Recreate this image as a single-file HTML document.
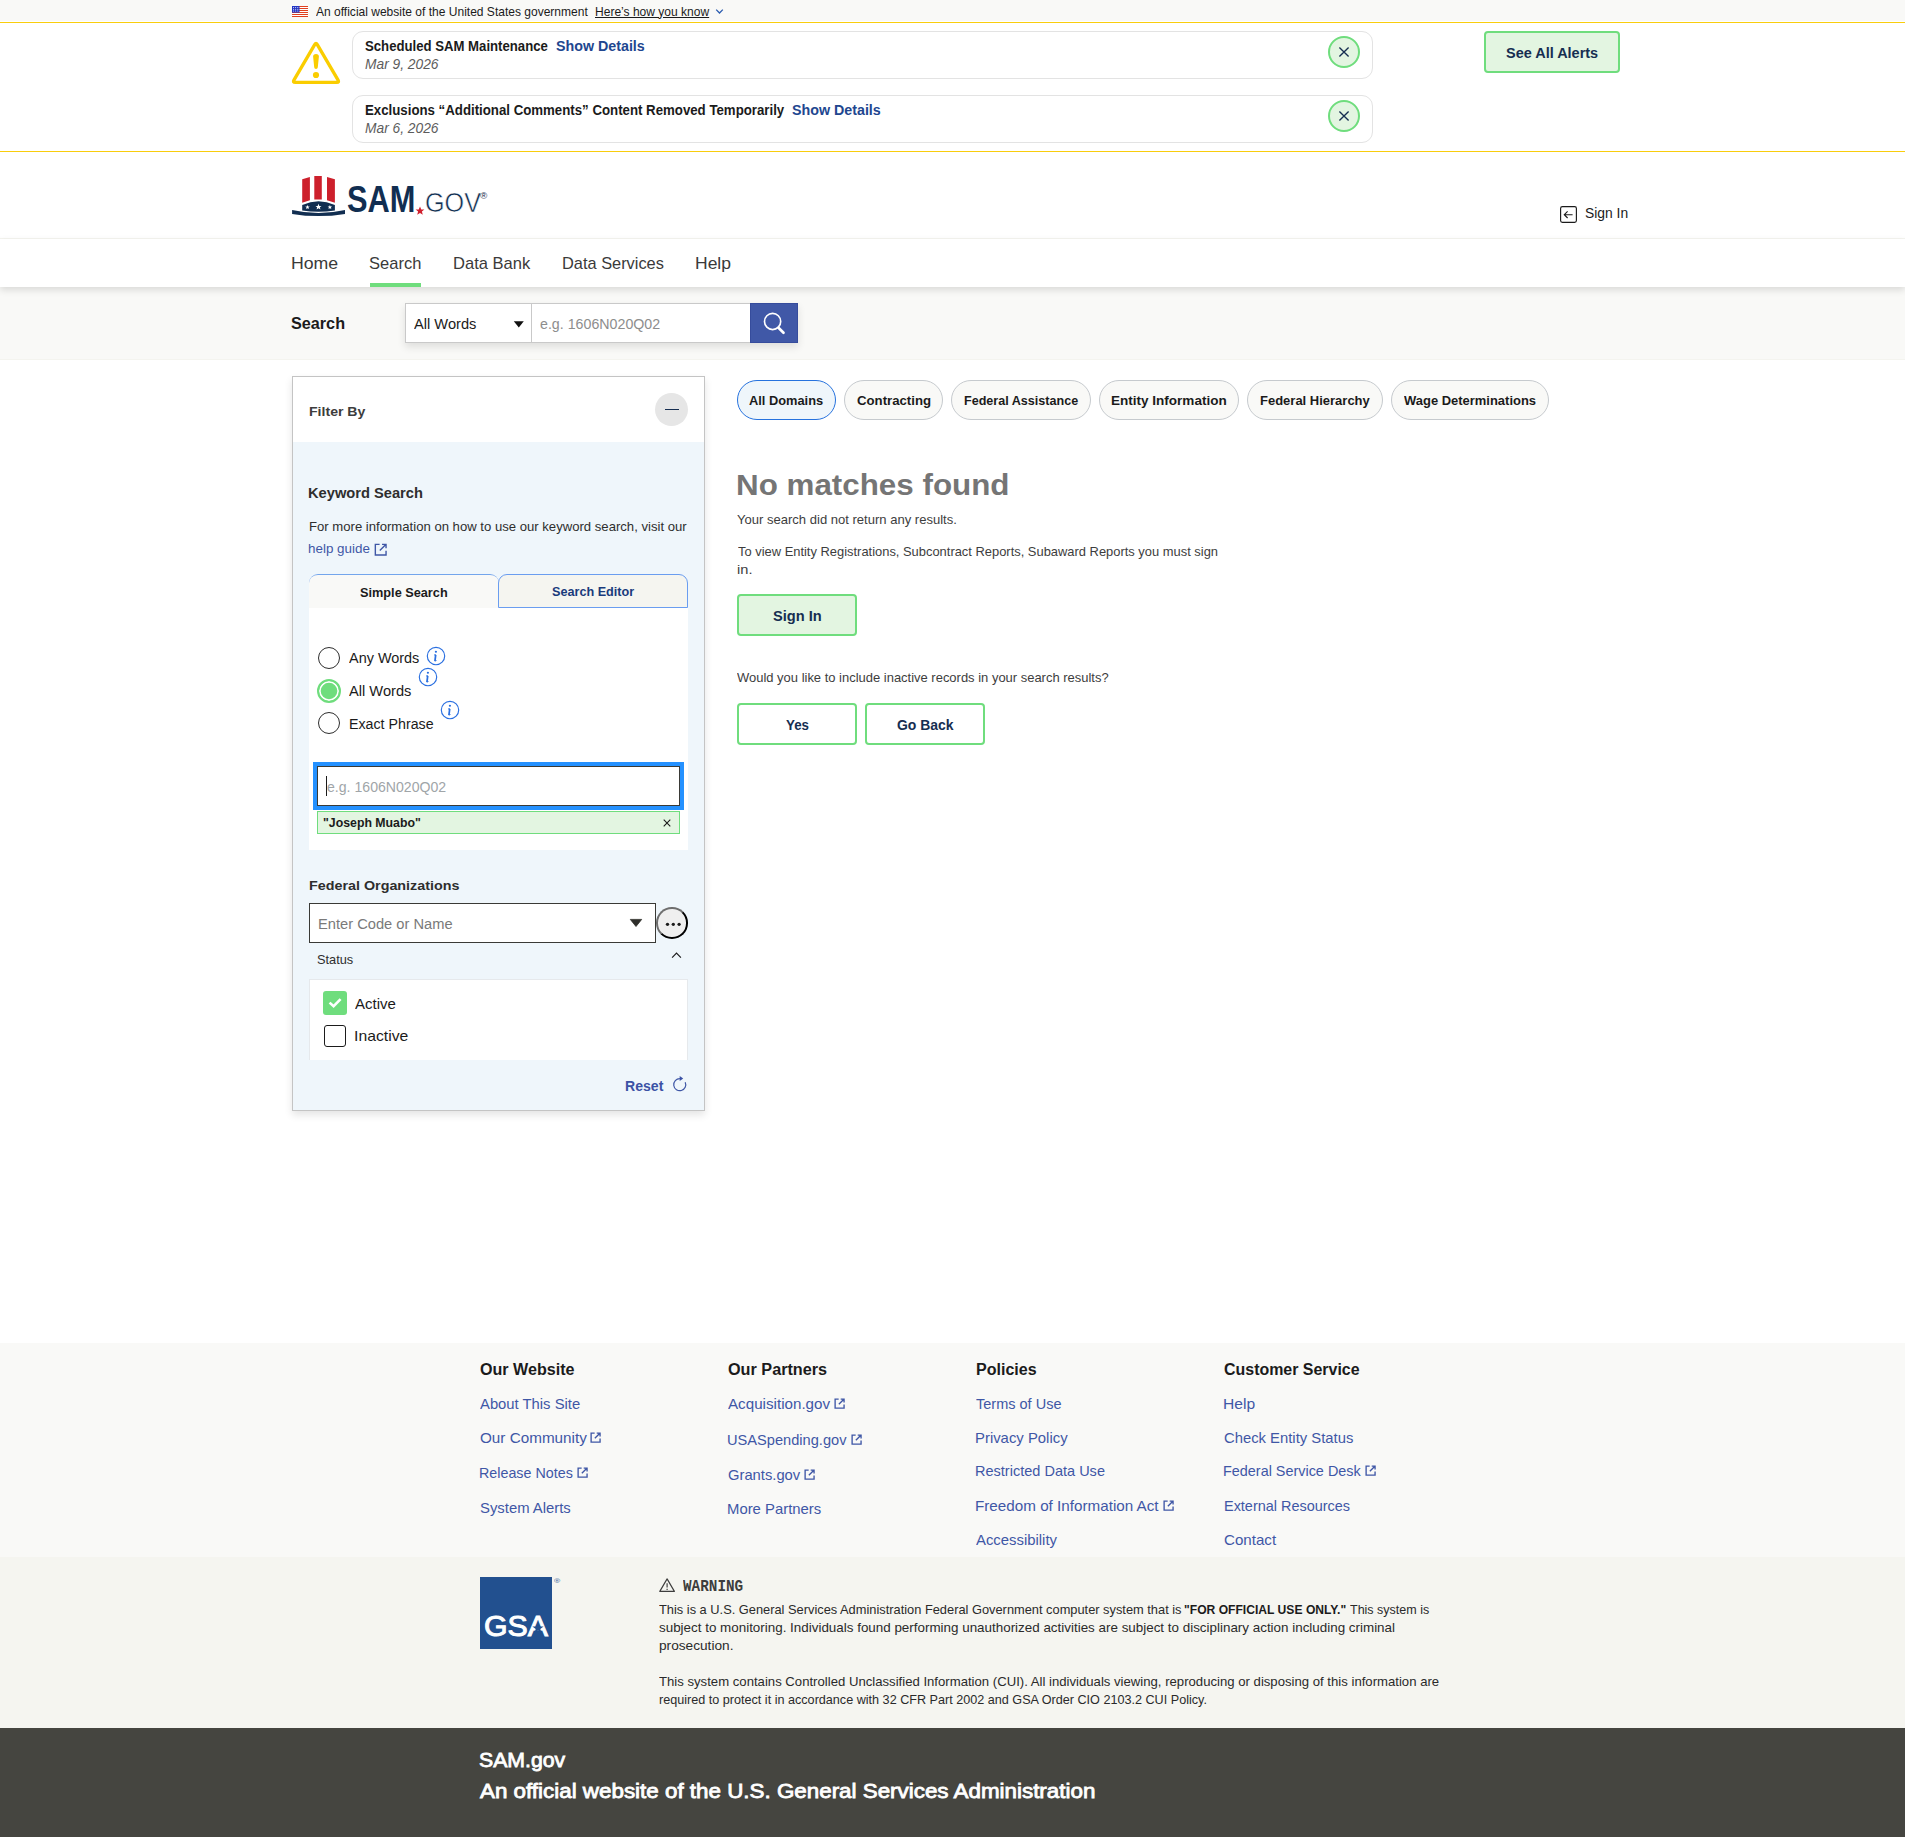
<!DOCTYPE html>
<html lang="en"><head><meta charset="utf-8"><title>SAM.gov | Search</title>
<style>
html,body{margin:0;padding:0}
body{width:1905px;height:1837px;position:relative;overflow:hidden;background:#fff;
 font-family:"Liberation Sans",sans-serif;color:#1b1b1b}
.a{position:absolute;display:block}
.t{position:absolute;white-space:nowrap;line-height:1;transform-origin:0 0;display:block;margin:0;padding:0;font-weight:400;text-decoration:none}
.band{position:absolute;left:0;width:1905px}
.card{position:absolute;box-sizing:border-box;border:1px solid #e3e3e3;border-radius:11px;background:#fff}
.gbtn{position:absolute;box-sizing:border-box;border:2px solid #6fdd7d;border-radius:4px;background:#e3f5e1}
.pill{position:absolute;box-sizing:border-box;height:40px;top:380px;border:1px solid #c6cace;border-radius:20px;background:#f9f9f7}
.radio{position:absolute;box-sizing:border-box;width:22px;height:22px;border-radius:50%;border:1.5px solid #2e2e2e;background:#fff}
a{color:inherit;text-decoration:none}
</style></head><body>

<section aria-label="Official government website">
<div class="band" style="top:0;height:21px;background:#f9f9f7"></div>
<div class="band" style="top:22px;height:1px;background:#f9cd0c"></div>
<div class="band" style="top:151px;height:1px;background:#f9cd0c"></div>
<svg class="a" style="left:292px;top:6px" width="16" height="11" viewBox="0 0 16 11" shape-rendering="crispEdges"><rect width="16" height="11" fill="#fff"/><rect y="0" width="16" height="1" fill="#e0401f"/><rect y="2" width="16" height="1" fill="#e0401f"/><rect y="4" width="16" height="1" fill="#e0401f"/><rect y="6" width="16" height="1" fill="#e0401f"/><rect y="8" width="16" height="1" fill="#e0401f"/><rect y="10" width="16" height="1" fill="#e0401f"/><rect width="7.5" height="6.6" fill="#2436c4" shape-rendering="auto"/><g fill="#fff" shape-rendering="auto"><circle cx="1.6" cy="1.5" r=".5"/><circle cx="3.7" cy="1.5" r=".5"/><circle cx="5.8" cy="1.5" r=".5"/><circle cx="1.6" cy="3.3" r=".5"/><circle cx="3.7" cy="3.3" r=".5"/><circle cx="5.8" cy="3.3" r=".5"/><circle cx="1.6" cy="5.1" r=".5"/><circle cx="3.7" cy="5.1" r=".5"/><circle cx="5.8" cy="5.1" r=".5"/></g></svg>
<span class="t" style="left:315.59px;top:5.76px;font-size:12.1px;color:#1b1b1b;transform:scaleX(0.9941);">An official website of the United States government</span>
<a href="#" class="t" style="left:594.99px;top:5.76px;font-size:12.1px;color:#1b1b1b;transform:scaleX(0.9950);text-decoration:underline;">Here’s how you know</a>
<svg class="a" style="left:715px;top:8px" width="9" height="7" viewBox="0 0 9 7" fill="none" stroke="#2b5cb0" stroke-width="1.3"><path d="M1.2 1.6L4.5 5 7.8 1.6"/></svg>
</section>
<section aria-label="Site alerts">
<svg class="a" style="left:290px;top:40px" width="52" height="46" viewBox="290 40 52 46" fill="none"><path d="M314.69 44.64Q316 42.4 317.31 44.64L338.09 80.16Q339.4 82.4 336.8 82.4H295.2Q292.6 82.4 293.91 80.16Z" stroke="#facd00" stroke-width="3.3" stroke-linejoin="round"/><path d="M313.1 56.6Q313.1 53.9 316 53.9Q318.9 53.9 318.9 56.6L317.8 67.2Q317.7 68.9 316 68.9Q314.3 68.9 314.2 67.2Z" fill="#facd00"/><circle cx="316" cy="75" r="3.1" fill="#facd00"/></svg>
<div class="card" style="left:352px;top:31px;width:1021px;height:48px"></div>
<svg class="a" style="left:1327px;top:35px" width="34" height="34" viewBox="-17 -17 34 34"><circle r="15" fill="#e3f5e1" stroke="#6fdd7d" stroke-width="2"/><path d="M-4.6 -4.6L4.6 4.6M4.6 -4.6L-4.6 4.6" stroke="#162e51" stroke-width="1.35"/></svg>
<div class="card" style="left:352px;top:95px;width:1021px;height:48px"></div>
<svg class="a" style="left:1327px;top:99px" width="34" height="34" viewBox="-17 -17 34 34"><circle r="15" fill="#e3f5e1" stroke="#6fdd7d" stroke-width="2"/><path d="M-4.6 -4.6L4.6 4.6M4.6 -4.6L-4.6 4.6" stroke="#162e51" stroke-width="1.35"/></svg>
<span class="t" style="left:364.79px;top:39.15px;font-size:14.0px;color:#1b1b1b;font-weight:700;transform:scaleX(0.9401);">Scheduled SAM Maintenance</span>
<a href="#" class="t" style="left:556.28px;top:39.15px;font-size:14.0px;color:#21468f;font-weight:700;transform:scaleX(1.0185);">Show Details</a>
<span class="t" style="left:365.38px;top:56.98px;font-size:14.2px;color:#5c5c5c;font-style:italic;transform:scaleX(0.9711);">Mar 9, 2026</span>
<span class="t" style="left:365.05px;top:103.15px;font-size:14.0px;color:#1b1b1b;font-weight:700;transform:scaleX(0.9460);">Exclusions “Additional Comments” Content Removed Temporarily</span>
<a href="#" class="t" style="left:792.48px;top:103.15px;font-size:14.0px;color:#21468f;font-weight:700;transform:scaleX(1.0185);">Show Details</a>
<span class="t" style="left:365.38px;top:120.98px;font-size:14.2px;color:#5c5c5c;font-style:italic;transform:scaleX(0.9711);">Mar 6, 2026</span>
<div class="gbtn" style="left:1484px;top:31px;width:136px;height:42px"></div>
<span class="t" style="left:1506.18px;top:45.81px;font-size:14.4px;color:#162e51;font-weight:700;transform:scaleX(1.0046);">See All Alerts</span>
</section>
<header>
<div class="band" style="top:238px;height:1px;background:#f5f5f0"></div>
<svg class="a" style="left:290px;top:174px" width="58" height="46" viewBox="290 174 58 46"><path d="M302.2 179.2L309.9 177V200.2L302.2 202.7Z" fill="#cd202c"/><path d="M314.3 176.1H321.8V199.6Q318 199.2 314.3 199.6Z" fill="#cd202c"/><path d="M327 177L334.9 179.2V202.7L327 200.2Z" fill="#cd202c"/><path d="M302.2 204.9Q318.5 197.5 334.9 204.9V210.4Q318.5 213 302.2 210.4Z" fill="#112e51"/><path d="M292.1 209.9Q318.5 215.9 345 209.9V213.9Q318.5 218.3 292.1 213.9Z" fill="#112e51"/><g fill="#fff"><path d="M0 -2.3L0.65 -0.75 2.25 -0.7 1 0.3 1.4 1.9 0 1 -1.4 1.9 -1 0.3 -2.25 -0.7 -0.65 -0.75Z" transform="translate(307.5 207.2)"/><path d="M0 -3.1L0.85 -1 3 -0.95 1.35 0.4 1.9 2.5 0 1.3 -1.9 2.5 -1.35 0.4 -3 -0.95 -0.85 -1Z" transform="translate(318.5 206.9)"/><path d="M0 -2.3L0.65 -0.75 2.25 -0.7 1 0.3 1.4 1.9 0 1 -1.4 1.9 -1 0.3 -2.25 -0.7 -0.65 -0.75Z" transform="translate(329.9 207.2)"/></g></svg>
<span class="t" style="left:347.14px;top:181.76px;font-size:36.9px;color:#112e51;font-weight:700;transform:scaleX(0.8335);">SAM</span>
<svg class="a" style="left:415px;top:206px" width="10" height="10" viewBox="-5 -5 10 10"><path d="M0 -4.5L1.25 -1.4 4.4 -1.4 1.9 0.55 2.8 3.8 0 1.9 -2.8 3.8 -1.9 0.55 -4.4 -1.4 -1.25 -1.4Z" fill="#d0202e"/></svg>
<span class="t" style="left:425.16px;top:187.96px;font-size:28.4px;color:#112e51;transform:scaleX(0.8863);-webkit-text-stroke:0.55px #fff;">GOV</span>
<span class="t" style="left:480.20px;top:190.96px;font-size:9.5px;color:#14284b;">®</span>
<svg class="a" style="left:1559px;top:205px" width="19" height="19" viewBox="0 0 19 19" fill="none" stroke="#1b1b1b" stroke-width="1.15"><rect x="1.6" y="1.6" width="15.8" height="15.8" rx="1.8"/><path d="M13.6 9.7H5.6M8.6 6.4L5.3 9.7 8.6 13"/></svg>
<a href="#" class="t" style="left:1585.17px;top:205.73px;font-size:14.5px;color:#1b1b1b;transform:scaleX(0.9546);">Sign In</a>
<nav aria-label="Primary navigation">
<div class="band" style="top:239px;height:48px;background:#fff;box-shadow:0 3px 7px rgba(0,0,0,.13);z-index:2"></div>
<div class="band" style="top:287px;height:73px;background:#f9f9f7"></div>
<div class="band" style="top:359px;height:1px;background:#f4f4ef"></div>
<a href="#" class="t" style="left:290.97px;top:255.29px;font-size:16.2px;color:#3a3a3a;transform:scaleX(1.0931);z-index:3;">Home</a>
<a href="#" class="t" style="left:368.97px;top:255.29px;font-size:16.2px;color:#3a3a3a;transform:scaleX(1.0200);z-index:3;">Search</a>
<a href="#" class="t" style="left:453.28px;top:255.29px;font-size:16.2px;color:#3a3a3a;transform:scaleX(1.0212);z-index:3;">Data Bank</a>
<a href="#" class="t" style="left:562.08px;top:255.29px;font-size:16.2px;color:#3a3a3a;transform:scaleX(1.0113);z-index:3;">Data Services</a>
<a href="#" class="t" style="left:695.03px;top:255.29px;font-size:16.2px;color:#3a3a3a;transform:scaleX(1.0808);z-index:3;">Help</a>
<div class="a" style="left:370px;top:283px;width:51px;height:4px;background:#6fdd7d;z-index:3"></div>
</nav></header>
<main><form role="search">
<span class="t" style="left:291.10px;top:315.29px;font-size:16.2px;color:#1b1b1b;font-weight:700;transform:scaleX(1.0005);">Search</span>
<div class="a" style="left:405px;top:303px;width:393px;height:40px;box-shadow:0 4px 8px rgba(0,0,0,.11)"></div>
<div class="a" style="left:405px;top:303px;width:127px;height:40px;box-sizing:border-box;border:1px solid #c9c9c9;background:#fff"></div>
<div class="a" style="left:531px;top:303px;width:219px;height:40px;box-sizing:border-box;border:1px solid #c9c9c9;border-right:0;background:#fff"></div>
<span class="t" style="left:413.93px;top:316.56px;font-size:14.7px;color:#1b1b1b;transform:scaleX(0.9965);">All Words</span>
<svg class="a" style="left:513px;top:321px" width="12" height="7" viewBox="0 0 12 7"><path d="M0.8 0.3H10.8L5.8 6.4Z" fill="#111"/></svg>
<span class="t" style="left:540.30px;top:316.56px;font-size:14.7px;color:#8d8d8d;transform:scaleX(0.9681);">e.g. 1606N020Q02</span>
<div class="a" style="left:750px;top:303px;width:48px;height:40px;box-sizing:border-box;border:1px solid #364c9c;background:#4058a7"></div>
<svg class="a" style="left:750px;top:303px" width="48" height="40" viewBox="750 303 48 40" fill="none" stroke="#fff"><circle cx="772.6" cy="321.45" r="8.1" stroke-width="1.65"/><path d="M778.5 327.7L783.5 332.7" stroke-width="2.7" stroke-linecap="round"/></svg>
</form>
<aside aria-label="Filter By">
<div class="a" style="left:292px;top:376px;width:413px;height:735px;box-sizing:border-box;border:1px solid #c4c4c4;background:#eff6fb;box-shadow:0 4px 8px rgba(0,0,0,.11)"><div style="height:65px;background:#fff"></div></div>
<h2 class="t" style="left:308.58px;top:404.57px;font-size:13.5px;color:#3d3d3d;font-weight:700;transform:scaleX(1.0437);">Filter By</h2>
<div class="a" style="left:655px;top:393px;width:33px;height:33px;border-radius:50%;background:#e6e6e6"></div>
<div class="a" style="left:665px;top:408.6px;width:14.3px;height:1.3px;background:#162e51"></div>
<h3 class="t" style="left:308.47px;top:486.15px;font-size:14.0px;color:#2e2e2e;font-weight:700;transform:scaleX(1.0467);">Keyword Search</h3>
<span class="t" style="left:308.57px;top:520.76px;font-size:12.1px;color:#2e2e2e;transform:scaleX(1.0846);">For more information on how to use our keyword search, visit our</span>
<a href="#" class="t" style="left:308.44px;top:542.76px;font-size:12.1px;color:#3f57a6;transform:scaleX(1.1098);">help guide</a>
<svg class="a" style="left:374.3px;top:542.8px" width="13.4" height="13.4" viewBox="0 0 12 12" fill="none" stroke="#3f57a6" stroke-width="1.25"><path d="M5 1.2H1.2v9.6h9.6V7"/><path d="M7.2 1.2h3.6v3.6M10.6 1.4L5.2 6.8"/></svg>
<div class="a" style="left:309px;top:574px;width:190px;height:34px;box-sizing:border-box;border-top:1px solid #73a5ec;border-radius:9px 9px 0 0;background:#f9f9f7"></div>
<div class="a" style="left:498px;top:574px;width:190.3px;height:33.6px;box-sizing:border-box;border:1px solid #6a9df0;border-radius:9px 9px 0 0;background:#f5f5f0"></div>
<div class="a" style="left:309.2px;top:607.8px;width:379.1px;height:241.8px;background:#fff"></div>
<span class="t" style="left:359.90px;top:586.59px;font-size:12.3px;color:#1b1b1b;font-weight:700;transform:scaleX(1.0344);">Simple Search</span>
<span class="t" style="left:551.98px;top:585.59px;font-size:12.3px;color:#1a3b7c;font-weight:700;transform:scaleX(1.0281);">Search Editor</span>
<div class="radio" style="left:318px;top:647px"></div>
<div class="radio" style="left:317px;top:679px;width:24px;height:24px;border:2.2px solid #6fdd7d;background:#6fdd7d;box-shadow:inset 0 0 0 1.7px #fff"></div>
<div class="radio" style="left:318px;top:712px"></div>
<label class="t" style="left:348.73px;top:650.56px;font-size:14.7px;color:#1b1b1b;transform:scaleX(0.9826);">Any Words</label>
<label class="t" style="left:348.69px;top:683.56px;font-size:14.7px;color:#1b1b1b;transform:scaleX(0.9965);">All Words</label>
<label class="t" style="left:348.90px;top:716.56px;font-size:14.7px;color:#1b1b1b;transform:scaleX(0.9679);">Exact Phrase</label>
<svg class="a" style="left:426.35px;top:646.10px" width="20" height="20" viewBox="-10 -10 20 20" fill="none"><circle r="8.7" stroke="#2a6fe0" stroke-width="1.15"/><circle cx="-0.1" cy="-4.25" r="1.1" fill="#2a6fe0"/><path d="M-0.3 -1.1L-1.05 5.1" stroke="#2a6fe0" stroke-width="1.75"/><path d="M-2 -0.9L-0.2 -1.5M-1.2 5L0.5 4.5" stroke="#2a6fe0" stroke-width="0.9"/></svg>
<svg class="a" style="left:418.30px;top:667.30px" width="20" height="20" viewBox="-10 -10 20 20" fill="none"><circle r="8.7" stroke="#2a6fe0" stroke-width="1.15"/><circle cx="-0.1" cy="-4.25" r="1.1" fill="#2a6fe0"/><path d="M-0.3 -1.1L-1.05 5.1" stroke="#2a6fe0" stroke-width="1.75"/><path d="M-2 -0.9L-0.2 -1.5M-1.2 5L0.5 4.5" stroke="#2a6fe0" stroke-width="0.9"/></svg>
<svg class="a" style="left:440.20px;top:700.30px" width="20" height="20" viewBox="-10 -10 20 20" fill="none"><circle r="8.7" stroke="#2a6fe0" stroke-width="1.15"/><circle cx="-0.1" cy="-4.25" r="1.1" fill="#2a6fe0"/><path d="M-0.3 -1.1L-1.05 5.1" stroke="#2a6fe0" stroke-width="1.75"/><path d="M-2 -0.9L-0.2 -1.5M-1.2 5L0.5 4.5" stroke="#2a6fe0" stroke-width="0.9"/></svg>
<div class="a" style="left:313px;top:762px;width:371px;height:48px;background:#2491ff"></div>
<div class="a" style="left:317px;top:766px;width:363px;height:40px;box-sizing:border-box;border:1px solid #3a3a36;background:#fff"></div>
<div class="a" style="left:326px;top:776px;width:1px;height:19.5px;background:#1b1b1b"></div>
<span class="t" style="left:326.76px;top:779.56px;font-size:14.7px;color:#a0a5a8;transform:scaleX(0.9602);">e.g. 1606N020Q02</span>
<div class="a" style="left:317px;top:811px;width:363px;height:23px;box-sizing:border-box;border:1px solid #6fdd7d;background:#e3f5e1"></div>
<span class="t" style="left:322.98px;top:816.59px;font-size:12.3px;color:#1b1b1b;font-weight:700;transform:scaleX(1.0010);">"Joseph Muabo"</span>
<svg class="a" style="left:663px;top:819px" width="8" height="8" viewBox="0 0 8 8" stroke="#1b1b1b" stroke-width="1.1"><path d="M0.7 0.7L7.3 7.3M7.3 0.7L0.7 7.3"/></svg>
<h3 class="t" style="left:308.59px;top:879.40px;font-size:13.7px;color:#2e2e2e;font-weight:700;transform:scaleX(1.0463);">Federal Organizations</h3>
<div class="a" style="left:309px;top:903px;width:347px;height:40px;box-sizing:border-box;border:1px solid #3a3a36;background:#fff"></div>
<span class="t" style="left:318.15px;top:916.56px;font-size:14.7px;color:#7a7a7a;transform:scaleX(0.9988);">Enter Code or Name</span>
<svg class="a" style="left:629px;top:918px" width="14" height="10" viewBox="629 918 14 10"><path d="M630.3 919.4H641.7L636 926.5Z" fill="#2e2e2a" stroke="#2e2e2a" stroke-width="0.8" stroke-linejoin="round"/></svg>
<div class="a" style="left:656.3px;top:907.1px;width:31.7px;height:31.7px;box-sizing:border-box;border:2px solid;border-color:#6e6e6e #000 #000 #6e6e6e;border-radius:50%;background:#efefef"></div>
<svg class="a" style="left:664px;top:920px" width="20" height="8" viewBox="664 920 20 8" fill="#1b1b1b"><circle cx="667.5" cy="924.3" r="1.65"/><circle cx="673.3" cy="924.3" r="1.65"/><circle cx="679.1" cy="924.3" r="1.65"/></svg>
<span class="t" style="left:317.22px;top:953.76px;font-size:12.1px;color:#2e2e2e;transform:scaleX(1.0578);">Status</span>
<svg class="a" style="left:670px;top:951px" width="14" height="9" viewBox="670 951 14 9" fill="none" stroke="#1b1b1b" stroke-width="1.15"><path d="M672.1 957.6L676.5 953.1 680.9 957.6"/></svg>
<div class="a" style="left:309.2px;top:978.5px;width:379.1px;height:81px;box-sizing:border-box;border:1px solid #e6e9ec;border-bottom:0;background:#fff"></div>
<div class="a" style="left:323px;top:991px;width:24px;height:24px;border-radius:3px;background:#6fdd7d"></div>
<svg class="a" style="left:323px;top:991px" width="24" height="24" viewBox="0 0 24 24" fill="none" stroke="#fff" stroke-width="2.6"><path d="M6.6 11.6L10.6 15.2 17.6 8.2"/></svg>
<div class="a" style="left:324px;top:1025px;width:22px;height:22px;box-sizing:border-box;border:1.6px solid #1b1b1b;border-radius:3px;background:#fff"></div>
<label class="t" style="left:354.61px;top:996.64px;font-size:14.6px;color:#1b1b1b;transform:scaleX(1.0285);">Active</label>
<label class="t" style="left:353.94px;top:1028.64px;font-size:14.6px;color:#1b1b1b;transform:scaleX(1.0795);">Inactive</label>
<a href="#" class="t" style="left:625.03px;top:1080.23px;font-size:13.9px;color:#3b52a5;font-weight:700;transform:scaleX(1.0128);">Reset</a>
<svg class="a" style="left:671px;top:1075px" width="18" height="18" viewBox="671 1075 18 18" fill="none" stroke="#3f57a6" stroke-width="1.2"><path d="M685.2 1082.2A6 6 0 1 1 679.9 1078.7"/><path d="M679.7 1075.9L683.2 1078.5 679.7 1081.1Z" fill="#3b52a5" stroke="none"/></svg>
</aside>
<section aria-label="Domains">
<div class="pill" style="left:737px;width:99px;border-color:#2672de;background:#eff6fb;"></div>
<span class="t" style="left:749.23px;top:394.59px;font-size:12.3px;color:#1b1b1b;font-weight:700;transform:scaleX(1.0431);">All Domains</span>
<div class="pill" style="left:844px;width:99px;"></div>
<span class="t" style="left:856.60px;top:394.59px;font-size:12.3px;color:#1b1b1b;font-weight:700;transform:scaleX(1.0729);">Contracting</span>
<div class="pill" style="left:951px;width:140px;"></div>
<span class="t" style="left:963.76px;top:394.59px;font-size:12.3px;color:#1b1b1b;font-weight:700;transform:scaleX(1.0222);">Federal Assistance</span>
<div class="pill" style="left:1099px;width:140px;"></div>
<span class="t" style="left:1111.20px;top:394.59px;font-size:12.3px;color:#1b1b1b;font-weight:700;transform:scaleX(1.0998);">Entity Information</span>
<div class="pill" style="left:1247px;width:136px;"></div>
<span class="t" style="left:1259.65px;top:394.59px;font-size:12.3px;color:#1b1b1b;font-weight:700;transform:scaleX(1.0566);">Federal Hierarchy</span>
<div class="pill" style="left:1391px;width:158px;"></div>
<span class="t" style="left:1403.98px;top:394.59px;font-size:12.3px;color:#1b1b1b;font-weight:700;transform:scaleX(1.0540);">Wage Determinations</span>
</section>
<section aria-label="Search results">
<h1 class="t" style="left:735.97px;top:470.11px;font-size:29.4px;color:#757575;font-weight:700;transform:scaleX(1.0668);">No matches found</h1>
<span class="t" style="left:737.01px;top:513.72px;font-size:12.15px;color:#3d3d3d;transform:scaleX(1.0741);">Your search did not return any results.</span>
<span class="t" style="left:737.91px;top:545.72px;font-size:12.15px;color:#3d3d3d;transform:scaleX(1.0633);">To view Entity Registrations, Subcontract Reports, Subaward Reports you must sign</span>
<span class="t" style="left:736.73px;top:563.72px;font-size:12.15px;color:#3d3d3d;transform:scaleX(1.2038);">in.</span>
<div class="gbtn" style="left:737px;top:594px;width:120px;height:42px"></div>
<span class="t" style="left:773.16px;top:608.81px;font-size:14.4px;color:#162e51;font-weight:700;transform:scaleX(1.0167);">Sign In</span>
<span class="t" style="left:736.94px;top:671.72px;font-size:12.15px;color:#3d3d3d;transform:scaleX(1.0680);">Would you like to include inactive records in your search results?</span>
<div class="gbtn" style="left:737px;top:703px;width:120px;height:42px;background:#fff"></div>
<div class="gbtn" style="left:865px;top:703px;width:120px;height:42px;background:#fff"></div>
<span class="t" style="left:785.81px;top:717.81px;font-size:14.4px;color:#162e51;font-weight:700;transform:scaleX(0.9279);">Yes</span>
<span class="t" style="left:897.41px;top:717.81px;font-size:14.4px;color:#162e51;font-weight:700;transform:scaleX(0.9695);">Go Back</span>
</section></main>
<footer>
<div class="band" style="top:1343px;height:214px;background:#f9f9f7"></div>
<div class="band" style="top:1557px;height:171px;background:#f5f5f0"></div>
<div class="band" style="top:1728px;height:109px;background:#454540"></div>
<h3 class="t" style="left:480.17px;top:1361.63px;font-size:15.8px;color:#1b1b1b;font-weight:700;transform:scaleX(1.0197);">Our Website</h3>
<h3 class="t" style="left:728.17px;top:1361.63px;font-size:15.8px;color:#1b1b1b;font-weight:700;transform:scaleX(1.0262);">Our Partners</h3>
<h3 class="t" style="left:975.96px;top:1361.63px;font-size:15.8px;color:#1b1b1b;font-weight:700;transform:scaleX(1.0146);">Policies</h3>
<h3 class="t" style="left:1224.21px;top:1361.63px;font-size:15.8px;color:#1b1b1b;font-weight:700;transform:scaleX(1.0095);">Customer Service</h3>
<a href="#" class="t" style="left:479.90px;top:1396.90px;font-size:14.3px;color:#3f57a6;transform:scaleX(1.0357);">About This Site</a>
<a href="#" class="t" style="left:479.96px;top:1430.90px;font-size:14.3px;color:#3f57a6;transform:scaleX(1.0670);">Our Community</a>
<svg class="a" style="left:590.1px;top:1432.2px" width="11.2" height="11.2" viewBox="0 0 12 12" fill="none" stroke="#3f57a6" stroke-width="1.45"><path d="M5 1.2H1.2v9.6h9.6V7"/><path d="M7.2 1.2h3.6v3.6M10.6 1.4L5.2 6.8"/></svg>
<a href="#" class="t" style="left:479.32px;top:1465.90px;font-size:14.3px;color:#3f57a6;transform:scaleX(1.0003);">Release Notes</a>
<svg class="a" style="left:576.6px;top:1467.2px" width="11.2" height="11.2" viewBox="0 0 12 12" fill="none" stroke="#3f57a6" stroke-width="1.45"><path d="M5 1.2H1.2v9.6h9.6V7"/><path d="M7.2 1.2h3.6v3.6M10.6 1.4L5.2 6.8"/></svg>
<a href="#" class="t" style="left:479.83px;top:1500.90px;font-size:14.3px;color:#3f57a6;transform:scaleX(1.0390);">System Alerts</a>
<a href="#" class="t" style="left:728.04px;top:1396.90px;font-size:14.3px;color:#3f57a6;transform:scaleX(1.0614);">Acquisition.gov</a>
<svg class="a" style="left:834.1px;top:1398.2px" width="11.2" height="11.2" viewBox="0 0 12 12" fill="none" stroke="#3f57a6" stroke-width="1.45"><path d="M5 1.2H1.2v9.6h9.6V7"/><path d="M7.2 1.2h3.6v3.6M10.6 1.4L5.2 6.8"/></svg>
<a href="#" class="t" style="left:727.38px;top:1432.90px;font-size:14.3px;color:#3f57a6;transform:scaleX(1.0229);">USASpending.gov</a>
<svg class="a" style="left:850.6px;top:1434.2px" width="11.2" height="11.2" viewBox="0 0 12 12" fill="none" stroke="#3f57a6" stroke-width="1.45"><path d="M5 1.2H1.2v9.6h9.6V7"/><path d="M7.2 1.2h3.6v3.6M10.6 1.4L5.2 6.8"/></svg>
<a href="#" class="t" style="left:727.89px;top:1467.90px;font-size:14.3px;color:#3f57a6;transform:scaleX(1.0324);">Grants.gov</a>
<svg class="a" style="left:803.6px;top:1469.2px" width="11.2" height="11.2" viewBox="0 0 12 12" fill="none" stroke="#3f57a6" stroke-width="1.45"><path d="M5 1.2H1.2v9.6h9.6V7"/><path d="M7.2 1.2h3.6v3.6M10.6 1.4L5.2 6.8"/></svg>
<a href="#" class="t" style="left:727.12px;top:1501.90px;font-size:14.3px;color:#3f57a6;transform:scaleX(1.0397);">More Partners</a>
<a href="#" class="t" style="left:976.35px;top:1396.90px;font-size:14.3px;color:#3f57a6;transform:scaleX(1.0151);">Terms of Use</a>
<a href="#" class="t" style="left:975.07px;top:1430.90px;font-size:14.3px;color:#3f57a6;transform:scaleX(1.0405);">Privacy Policy</a>
<a href="#" class="t" style="left:975.23px;top:1463.90px;font-size:14.3px;color:#3f57a6;transform:scaleX(1.0159);">Restricted Data Use</a>
<a href="#" class="t" style="left:975.02px;top:1498.90px;font-size:14.3px;color:#3f57a6;transform:scaleX(1.0647);">Freedom of Information Act</a>
<svg class="a" style="left:1162.6px;top:1500.2px" width="11.2" height="11.2" viewBox="0 0 12 12" fill="none" stroke="#3f57a6" stroke-width="1.45"><path d="M5 1.2H1.2v9.6h9.6V7"/><path d="M7.2 1.2h3.6v3.6M10.6 1.4L5.2 6.8"/></svg>
<a href="#" class="t" style="left:976.07px;top:1532.90px;font-size:14.3px;color:#3f57a6;transform:scaleX(1.0403);">Accessibility</a>
<a href="#" class="t" style="left:1223.49px;top:1396.90px;font-size:14.3px;color:#3f57a6;transform:scaleX(1.0924);">Help</a>
<a href="#" class="t" style="left:1223.89px;top:1430.90px;font-size:14.3px;color:#3f57a6;transform:scaleX(1.0365);">Check Entity Status</a>
<a href="#" class="t" style="left:1223.31px;top:1463.90px;font-size:14.3px;color:#3f57a6;transform:scaleX(1.0076);">Federal Service Desk</a>
<svg class="a" style="left:1364.6px;top:1465.2px" width="11.2" height="11.2" viewBox="0 0 12 12" fill="none" stroke="#3f57a6" stroke-width="1.45"><path d="M5 1.2H1.2v9.6h9.6V7"/><path d="M7.2 1.2h3.6v3.6M10.6 1.4L5.2 6.8"/></svg>
<a href="#" class="t" style="left:1223.86px;top:1498.90px;font-size:14.3px;color:#3f57a6;transform:scaleX(1.0104);">External Resources</a>
<a href="#" class="t" style="left:1223.87px;top:1532.90px;font-size:14.3px;color:#3f57a6;transform:scaleX(1.0580);">Contact</a>
<div class="a" style="left:480px;top:1577px;width:72px;height:72px;background:#22508f"></div>
<span class="t" style="left:483.64px;top:1610.27px;font-size:30.4px;color:#fff;transform:scaleX(0.9972);-webkit-text-stroke:1px #fff;">GSA</span>
<svg class="a" style="left:531px;top:1621px" width="14" height="14" viewBox="-7 -7 14 14"><path d="M0 -5.6L1.5 -1.6 5.6 -1.6 2.3 0.9 3.5 5 0 2.5 -3.5 5 -2.3 0.9 -5.6 -1.6 -1.5 -1.6Z" fill="#22508f"/></svg>
<span class="t" style="left:553.90px;top:1577.92px;font-size:6px;color:#22508f;transform:scaleX(1.3982);">®</span>
<svg class="a" style="left:658px;top:1577px" width="18" height="16" viewBox="658 1577 18 16" fill="none" stroke="#3d3d3d" stroke-width="1.15"><path d="M667.1 1578.9L674.4 1591.4H659.8Z" stroke-linejoin="round"/><path d="M667.1 1583.2V1587.6M667.1 1588.8V1590.1"/></svg>
<span class="t" style="left:683.00px;top:1579.27px;font-size:16.6px;color:#3d3d3d;font-weight:700;font-family:'Liberation Mono',monospace;transform:scaleX(0.8634);">WARNING</span>
<span class="t" style="left:659.01px;top:1603.72px;font-size:12.15px;color:#2a2a2a;transform:scaleX(1.0565);">This is a U.S. General Services Administration Federal Government computer system that is</span>
<span class="t" style="left:1183.83px;top:1603.72px;font-size:12.15px;color:#1b1b1b;font-weight:700;transform:scaleX(0.9972);">"FOR OFFICIAL USE ONLY."</span>
<span class="t" style="left:1349.58px;top:1603.72px;font-size:12.15px;color:#2a2a2a;transform:scaleX(1.0295);">This system is</span>
<span class="t" style="left:659.39px;top:1621.72px;font-size:12.15px;color:#2a2a2a;transform:scaleX(1.1039);">subject to monitoring. Individuals found performing unauthorized activities are subject to disciplinary action including criminal</span>
<span class="t" style="left:658.62px;top:1639.72px;font-size:12.15px;color:#2a2a2a;transform:scaleX(1.1256);">prosecution.</span>
<span class="t" style="left:659.49px;top:1675.72px;font-size:12.15px;color:#2a2a2a;transform:scaleX(1.0825);">This system contains Controlled Unclassified Information (CUI). All individuals viewing, reproducing or disposing of this information are</span>
<span class="t" style="left:658.73px;top:1693.72px;font-size:12.15px;color:#2a2a2a;transform:scaleX(1.0388);">required to protect it in accordance with 32 CFR Part 2002 and GSA Order CIO 2103.2 CUI Policy.</span>
<span class="t" style="left:479.14px;top:1749.73px;font-size:20.4px;color:#fff;transform:scaleX(1.0424);-webkit-text-stroke:0.8px #fff;">SAM.gov</span>
<span class="t" style="left:480.49px;top:1780.73px;font-size:20.4px;color:#fff;transform:scaleX(1.0976);-webkit-text-stroke:0.8px #fff;">An official website of the U.S. General Services Administration</span>
</footer>
</body></html>
